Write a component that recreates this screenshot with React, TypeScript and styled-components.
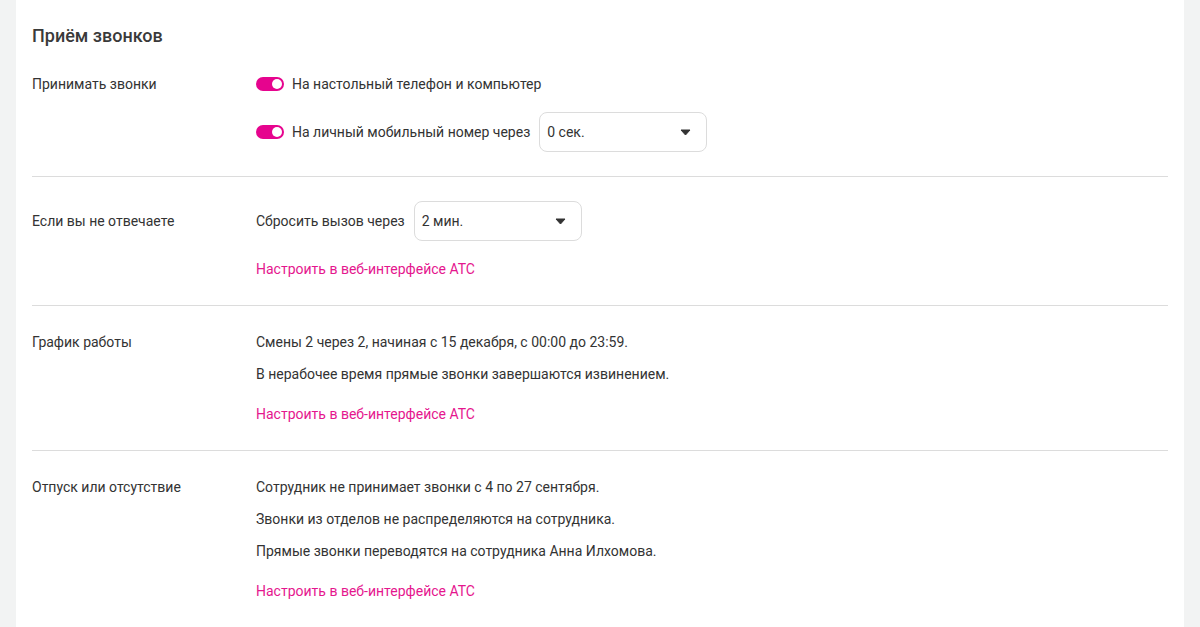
import React from "react";
import styled, { createGlobalStyle } from "styled-components";

const Global = createGlobalStyle`
  html, body { margin: 0; padding: 0; background: #f2f3f3; }
  body { font-family: Roboto, "Noto Sans", Arial, sans-serif; color: #333; -webkit-font-smoothing: antialiased; }
  * { box-sizing: border-box; }
`;

const Page = styled.div`
  padding: 0 16px;
  min-height: 627px;
  display: flex;
`;

const Card = styled.main`
  flex: 1;
  background: #fff;
  padding: 24px 16px 0;
`;

const Title = styled.h2`
  margin: 0 0 16px;
  font-size: 18px;
  line-height: 24px;
  font-weight: 500;
  color: #3a3a3a;
`;

const Section = styled.section<{ $last?: boolean }>`
  display: grid;
  grid-template-columns: 224px 1fr;
  padding-bottom: 24px;
  border-bottom: ${(p) => (p.$last ? "none" : "1px solid #dcdcdc")};
  & + & { padding-top: 24px; }
`;

const Label = styled.div<{ $control?: boolean }>`
  font-size: 14px;
  line-height: 24px;
  padding-top: ${(p) => (p.$control ? "8px" : "0")};
`;

const Content = styled.div`
  display: flex;
  flex-direction: column;
  align-items: flex-start;
`;

const ControlRow = styled.div`
  display: flex;
  align-items: center;
  gap: 8px;
  min-height: 40px;
  font-size: 14px;
  line-height: 24px;
  & + & { margin-top: 8px; }
`;

const Text = styled.p`
  margin: 0;
  font-size: 14px;
  line-height: 24px;
  & + & { margin-top: 8px; }
`;

const Link = styled.a`
  margin-top: 16px;
  font-size: 14px;
  line-height: 24px;
  color: #e5168e;
  text-decoration: none;
  cursor: pointer;
`;

const Toggle = styled.span<{ $on: boolean }>`
  position: relative;
  width: 28px;
  height: 14px;
  border-radius: 7px;
  background: ${(p) => (p.$on ? "#e6048e" : "#c8c8c8")};
  flex: none;
  &::after {
    content: "";
    position: absolute;
    top: 2px;
    left: ${(p) => (p.$on ? "16px" : "2px")};
    width: 10px;
    height: 10px;
    border-radius: 50%;
    background: #fff;
  }
`;

const Select = styled.div`
  width: 168px;
  height: 40px;
  margin-left: 1px;
  border: 1px solid #dcdcdc;
  border-radius: 8px;
  display: flex;
  align-items: center;
  justify-content: space-between;
  padding: 0 15px 0 7px;
  font-size: 14px;
  color: #333;
  background: #fff;
`;

const Caret = () => (
  <svg width="11" height="7" viewBox="0 0 11 7">
    <path d="M1 1h9L5.5 6z" fill="#333" stroke="#333" strokeWidth="1" strokeLinejoin="round" />
  </svg>
);

const Dropdown = ({ value }: { value: string }) => (
  <Select>
    <span>{value}</span>
    <Caret />
  </Select>
);

const PBX_LINK = "Настроить в веб-интерфейсе АТС";

export default function App() {
  return (
    <>
      <Global />
      <Page>
        <Card>
          <Title>Приём звонков</Title>

          <Section>
            <Label $control>Принимать звонки</Label>
            <Content>
              <ControlRow>
                <Toggle $on />
                <span>На настольный телефон и компьютер</span>
              </ControlRow>
              <ControlRow>
                <Toggle $on />
                <span>На личный мобильный номер через</span>
                <Dropdown value="0 сек." />
              </ControlRow>
            </Content>
          </Section>

          <Section>
            <Label $control>Если вы не отвечаете</Label>
            <Content>
              <ControlRow>
                <span>Сбросить вызов через</span>
                <Dropdown value="2 мин." />
              </ControlRow>
              <Link>{PBX_LINK}</Link>
            </Content>
          </Section>

          <Section>
            <Label>График работы</Label>
            <Content>
              <Text>Смены 2 через 2, начиная с 15 декабря, с 00:00 до 23:59.</Text>
              <Text>В нерабочее время прямые звонки завершаются извинением.</Text>
              <Link>{PBX_LINK}</Link>
            </Content>
          </Section>

          <Section $last>
            <Label>Отпуск или отсутствие</Label>
            <Content>
              <Text>Сотрудник не принимает звонки с 4 по 27 сентября.</Text>
              <Text>Звонки из отделов не распределяются на сотрудника.</Text>
              <Text>Прямые звонки переводятся на сотрудника Анна Илхомова.</Text>
              <Link>{PBX_LINK}</Link>
            </Content>
          </Section>
        </Card>
      </Page>
    </>
  );
}
